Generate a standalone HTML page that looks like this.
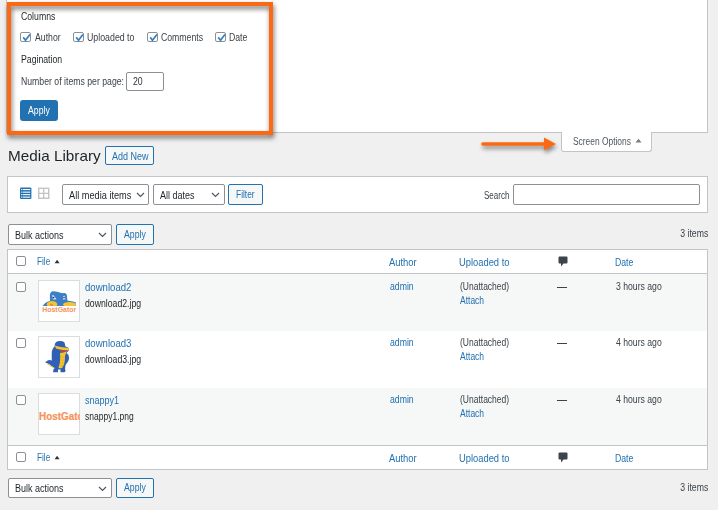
<!DOCTYPE html>
<html><head><meta charset="utf-8">
<style>
html,body{margin:0;padding:0;}
body{width:718px;height:510px;overflow:hidden;background:#f0f0f1;position:relative;font-family:"Liberation Sans",sans-serif;color:#3c434a;}
.a{position:absolute;box-sizing:border-box;}
.t{position:absolute;white-space:nowrap;font-size:10px;line-height:10px;transform:scaleX(.87);transform-origin:0 0;}
.tr{transform-origin:100% 0;}
.lk{color:#2271b1;}
.dk{color:#1d2327;}
.cb{position:absolute;box-sizing:border-box;width:11px;height:11px;border:1px solid #8c8f94;border-radius:2px;background:#fff;}
.cb svg{position:absolute;left:0px;top:0px;}
.sel{position:absolute;box-sizing:border-box;border:1px solid #8c8f94;border-radius:2px;background:#fff;}
.btn2{position:absolute;box-sizing:border-box;border:1px solid #2271b1;border-radius:2px;background:#f6f7f7;}
.chev{position:absolute;}
</style></head><body>

<!-- screen options panel -->
<div class="a" style="left:6px;top:-1px;width:702px;height:134px;background:#fff;border:1px solid #c3c4c7;"></div>
<div class="a" style="left:561px;top:132px;width:91px;height:20px;background:#fff;border:1px solid #c3c4c7;border-top:none;border-radius:0 0 3px 3px;z-index:2;"></div>
<div class="t" style="left:573px;top:137px;transform:scaleX(.84);z-index:3;color:#50575e;">Screen Options</div>
<svg class="a" style="left:635px;top:138px;z-index:3" width="7" height="5"><path d="M0.5 4.5 L3.5 0.8 L6.5 4.5Z" fill="#787c82"/></svg>

<div class="t dk" style="left:21px;top:12px;">Columns</div>

<div class="cb" style="left:20px;top:32px;height:10px;"><svg width="11" height="10"><path d="M2.2 4.2 L4.5 7.3 L8.9 1.5" stroke="#3582c4" stroke-width="1.7" fill="none"/></svg></div>
<div class="t" style="left:35px;top:33px;">Author</div>
<div class="cb" style="left:73px;top:32px;height:10px;"><svg width="11" height="10"><path d="M2.2 4.2 L4.5 7.3 L8.9 1.5" stroke="#3582c4" stroke-width="1.7" fill="none"/></svg></div>
<div class="t" style="left:87px;top:33px;transform:scaleX(.88);">Uploaded to</div>
<div class="cb" style="left:147px;top:32px;height:10px;"><svg width="11" height="10"><path d="M2.2 4.2 L4.5 7.3 L8.9 1.5" stroke="#3582c4" stroke-width="1.7" fill="none"/></svg></div>
<div class="t" style="left:161px;top:33px;">Comments</div>
<div class="cb" style="left:215px;top:32px;height:10px;"><svg width="11" height="10"><path d="M2.2 4.2 L4.5 7.3 L8.9 1.5" stroke="#3582c4" stroke-width="1.7" fill="none"/></svg></div>
<div class="t" style="left:229px;top:33px;">Date</div>

<div class="t dk" style="left:21px;top:55px;">Pagination</div>
<div class="t" style="left:21px;top:77px;">Number of items per page:</div>
<div class="sel" style="left:126px;top:72px;width:38px;height:19px;"></div>
<div class="t" style="left:133px;top:77px;color:#2c3338;">20</div>

<div class="a" style="left:20px;top:100px;width:38px;height:21px;background:#2271b1;border-radius:3px;"></div>
<div class="t" style="left:28px;top:106px;color:#fff;">Apply</div>

<!-- orange annotation box -->
<div class="a" style="left:7px;top:2px;width:266px;height:133px;border:4px solid #fd6912;filter:drop-shadow(1.5px 3.5px 2.5px rgba(0,0,0,.55));z-index:5;"></div>

<!-- arrow -->
<svg class="a" style="left:476px;top:134px;z-index:5;filter:drop-shadow(1px 3px 2px rgba(0,0,0,.45));" width="90" height="22">
<path d="M7 10 L70 10" stroke="#fd6912" stroke-width="3.6" stroke-linecap="round"/>
<path d="M68 3.6 L80 10 L68 16.2 Z" fill="#fd6912"/>
</svg>

<!-- heading -->
<div class="t dk" style="left:8px;top:148px;font-size:15px;line-height:15px;transform:scaleX(1.02);">Media Library</div>
<div class="btn2" style="left:105px;top:146px;width:49px;height:19px;"></div>
<div class="t lk" style="left:112px;top:151.5px;transform:scaleX(.9);">Add New</div>

<!-- filter bar -->
<div class="a" style="left:7px;top:176px;width:701px;height:37px;background:#fff;border:1px solid #c3c4c7;"></div>
<svg class="a" style="left:19px;top:187px;" width="34" height="14">
<rect x="1" y="0.6" width="11.4" height="11.4" rx="1" fill="#2271b1"/>
<rect x="3.6" y="2" width="7.6" height="1.1" fill="#fff"/><rect x="2.1" y="2" width="1" height="1.1" fill="#fff"/>
<rect x="3.6" y="4.6" width="7.6" height="1.1" fill="#fff"/><rect x="2.1" y="4.6" width="1" height="1.1" fill="#fff"/>
<rect x="3.6" y="7.1" width="7.6" height="1.1" fill="#fff"/><rect x="2.1" y="7.1" width="1" height="1.1" fill="#fff"/>
<rect x="3.6" y="9.6" width="7.6" height="1.1" fill="#fff"/><rect x="2.1" y="9.6" width="1" height="1.1" fill="#fff"/>
<rect x="19.7" y="1.3" width="10" height="10" fill="none" stroke="#c3c4c7" stroke-width="1.4"/>
<path d="M24.7 1.3 V11.3 M19.7 6.3 H29.7" stroke="#c3c4c7" stroke-width="1.3"/>
</svg>

<div class="sel" style="left:62px;top:184px;width:87px;height:21px;"></div>
<div class="t dk" style="left:69px;top:190.5px;transform:scaleX(.92);">All media items</div>
<svg class="chev" style="left:136px;top:192px;" width="9" height="6"><path d="M1 1 L4.5 4.5 L8 1" stroke="#50575e" stroke-width="1.2" fill="none"/></svg>
<div class="sel" style="left:153px;top:184px;width:72px;height:21px;"></div>
<div class="t dk" style="left:160px;top:190.5px;transform:scaleX(.9);">All dates</div>
<svg class="chev" style="left:211px;top:192px;" width="9" height="6"><path d="M1 1 L4.5 4.5 L8 1" stroke="#50575e" stroke-width="1.2" fill="none"/></svg>
<div class="btn2" style="left:228px;top:184px;width:35px;height:21px;"></div>
<div class="t lk" style="left:236px;top:190px;transform:scaleX(.84);">Filter</div>

<div class="t" style="left:484px;top:190.5px;transform:scaleX(.8);">Search</div>
<div class="sel" style="left:513px;top:184px;width:187px;height:21px;"></div>

<!-- bulk top -->
<div class="sel" style="left:8px;top:224px;width:104px;height:21px;"></div>
<div class="t dk" style="left:15px;top:230.5px;transform:scaleX(.9);">Bulk actions</div>
<svg class="chev" style="left:98px;top:232px;" width="9" height="6"><path d="M1 1 L4.5 4.5 L8 1" stroke="#50575e" stroke-width="1.2" fill="none"/></svg>
<div class="btn2" style="left:116px;top:224px;width:38px;height:21px;"></div>
<div class="t lk" style="left:124px;top:230px;">Apply</div>
<div class="t tr" style="right:10px;top:229px;">3 items</div>

<!-- table -->
<div class="a" style="left:7px;top:249px;width:701px;height:221px;background:#fff;border:1px solid #c3c4c7;"></div>
<div class="a" style="left:8px;top:273px;width:699px;height:1px;background:#c3c4c7;"></div>
<div class="a" style="left:8px;top:274px;width:699px;height:57px;background:#f6f7f7;"></div>
<div class="a" style="left:8px;top:388px;width:699px;height:57px;background:#f6f7f7;"></div>
<div class="a" style="left:8px;top:445px;width:699px;height:1px;background:#c3c4c7;"></div>

<!-- header -->
<div class="cb" style="left:16px;top:256px;width:10px;height:10px;"></div>
<div class="t lk" style="left:37px;top:257px;transform:scaleX(.82);">File</div>
<svg class="a" style="left:54px;top:259px;" width="6" height="5"><path d="M0.6 4.2 L3.1 0.8 L5.6 4.2Z" fill="#2c3338"/></svg>
<div class="t lk" style="left:389px;top:258px;transform:scaleX(.94);">Author</div>
<div class="t lk" style="left:459px;top:258px;transform:scaleX(.935);">Uploaded to</div>
<svg class="a" style="left:558px;top:256px;" width="10" height="11"><path d="M1.5 0.5 H8.5 Q9.5 0.5 9.5 1.5 V6.5 Q9.5 7.5 8.5 7.5 H5.5 L3 10.5 V7.5 H1.5 Q0.5 7.5 0.5 6.5 V1.5 Q0.5 0.5 1.5 0.5Z" fill="#3c434a"/></svg>
<div class="t lk" style="left:615px;top:258px;">Date</div>

<!-- footer -->
<div class="cb" style="left:16px;top:452px;width:10px;height:10px;"></div>
<div class="t lk" style="left:37px;top:453px;transform:scaleX(.82);">File</div>
<svg class="a" style="left:54px;top:455px;" width="6" height="5"><path d="M0.6 4.2 L3.1 0.8 L5.6 4.2Z" fill="#2c3338"/></svg>
<div class="t lk" style="left:389px;top:454px;transform:scaleX(.94);">Author</div>
<div class="t lk" style="left:459px;top:454px;transform:scaleX(.935);">Uploaded to</div>
<svg class="a" style="left:558px;top:452px;" width="10" height="11"><path d="M1.5 0.5 H8.5 Q9.5 0.5 9.5 1.5 V6.5 Q9.5 7.5 8.5 7.5 H5.5 L3 10.5 V7.5 H1.5 Q0.5 7.5 0.5 6.5 V1.5 Q0.5 0.5 1.5 0.5Z" fill="#3c434a"/></svg>
<div class="t lk" style="left:615px;top:454px;">Date</div>

<!-- row 1 -->
<div class="cb" style="left:16px;top:282px;width:10px;height:10px;"></div>
<div class="a" style="left:38px;top:280px;width:42px;height:42px;background:#fff;border:1px solid #dcdcde;"></div>
<svg class="a" style="left:38px;top:280px;" width="42" height="42">
<path d="M4.7 26 C6.5 23, 9.5 21.5, 12 20.8 L11.9 17 C11.8 12.8, 13.2 11.2, 15.3 11.2 C18.5 11.2, 21.5 12.8, 25 13.3 C26.5 12.9, 28 13.1, 28.8 14.8 L29.4 20.6 C32 21.2, 35.5 21.6, 37.7 22.3 L37.7 26 Z" fill="#3b7fc8"/>
<ellipse cx="14" cy="24.2" rx="5.2" ry="3.2" fill="#f3c532"/>
<ellipse cx="13.5" cy="25" rx="1.6" ry="1.2" fill="#ef8b3a"/>
<ellipse cx="31.5" cy="24.6" rx="6.5" ry="2.6" fill="#f3c532"/>
<rect x="4" y="26" width="35" height="2" fill="#fff"/>
<path d="M14.3 15 L15.5 15.3 L18.5 19.2 L15 19.6 Z" fill="#e9eef6"/>
<path d="M25.2 16 L26.6 15.8 L27.5 19.3 L25 19.5 Z" fill="#e9eef6"/>
<circle cx="15.6" cy="17.6" r="0.9" fill="#1d3f6a"/><circle cx="26" cy="17.6" r="0.8" fill="#1d3f6a"/>
<text x="4.2" y="32.2" font-family="Liberation Sans" font-weight="bold" font-size="6.8" fill="#f5955e" textLength="34" lengthAdjust="spacingAndGlyphs">HostGator</text>
</svg>
<div class="t lk" style="left:85px;top:282.5px;transform:scaleX(.96);">download2</div>
<div class="t dk" style="left:85px;top:299px;">download2.jpg</div>
<div class="t lk" style="left:390px;top:282px;">admin</div>
<div class="t" style="left:460px;top:282px;transform:scaleX(.85);">(Unattached)</div>
<div class="t lk" style="left:460px;top:296px;transform:scaleX(.85);">Attach</div>
<div class="a" style="left:557px;top:287px;width:10px;height:1px;background:#3c434a;"></div>
<div class="t" style="left:616px;top:282px;transform:scaleX(.865);">3 hours ago</div>

<!-- row 2 -->
<div class="cb" style="left:16px;top:338px;width:10px;height:10px;"></div>
<div class="a" style="left:38px;top:336px;width:42px;height:42px;background:#fff;border:1px solid #dcdcde;"></div>
<svg class="a" style="left:38px;top:336px;" width="42" height="42">
<path d="M18.5 5.8 C20.5 4.6, 24.5 4.8, 26.5 6.5 L27.5 10.5 L30.5 11.8 L30.8 14.5 L28.5 17 L30.5 19 C31.5 22, 31 25, 29 27 L27.5 29 L27 33 C28 34.5, 27.5 36.3, 26 36.3 L22.5 36.3 L22.5 33.5 L20 33.5 L20 36.3 L15.2 36.3 C15 34.5, 15.5 33, 16.5 32 C14.5 31, 12.5 29, 10.5 27.8 L7.2 26.6 C8.5 25, 10 24, 11.5 24 L13.8 24.5 L13.7 18 C13.7 14, 15 12, 16.5 10.5 L17 7.5 Z" fill="#3060b6"/>
<path d="M16.8 9.6 C20 10.6, 25 11.5, 30.6 11.9 L31 13.2 L30 14.4 C26 14.3, 21 13.8, 18 12.6 Z" fill="#f2c52c"/>
<path d="M20.5 13.8 C22.5 15.5, 25 16.6, 28.5 15.2 L29.2 14.3 C26 14.3, 23 14.2, 20.5 13.8 Z" fill="#d9472a"/>
<path d="M22 17 C24 17, 26.5 16.5, 28.8 15.3 C28 17.5, 27.3 19, 27 20 C27 24, 26.8 28, 24.5 31.5 C23 32.8, 21 32.5, 20.5 31.5 C22 28, 22.5 23, 22 17 Z" fill="#f2c52c"/>
<path d="M22.3 21 H26.9 M22.5 24 H26.7 M22.3 27 H26.2 M21.6 29.8 H25.2" stroke="#d8a21e" stroke-width="0.5"/>
<path d="M9 27.5 C11.5 29.2, 14 31.2, 16.5 32.3" stroke="#f2c52c" stroke-width="0.9" fill="none"/>
</svg>
<div class="t lk" style="left:85px;top:338.5px;transform:scaleX(.96);">download3</div>
<div class="t dk" style="left:85px;top:355px;">download3.jpg</div>
<div class="t lk" style="left:390px;top:338px;">admin</div>
<div class="t" style="left:460px;top:338px;transform:scaleX(.85);">(Unattached)</div>
<div class="t lk" style="left:460px;top:352px;transform:scaleX(.85);">Attach</div>
<div class="a" style="left:557px;top:343px;width:10px;height:1px;background:#3c434a;"></div>
<div class="t" style="left:616px;top:338px;transform:scaleX(.865);">4 hours ago</div>

<!-- row 3 -->
<div class="cb" style="left:16px;top:395px;width:10px;height:10px;"></div>
<div class="a" style="left:38px;top:393px;width:42px;height:42px;background:#fff;border:1px solid #dcdcde;"></div>
<div class="a" style="left:38px;top:393px;width:42px;height:42px;overflow:hidden;">
<svg width="42" height="42" style="position:absolute;left:0;top:0"><text x="1" y="26.7" font-family="Liberation Sans" font-weight="bold" font-size="10" fill="#f6925a" stroke="#f6925a" stroke-width="0.2" textLength="48.5" lengthAdjust="spacingAndGlyphs">HostGator</text></svg></div>
<div class="t lk" style="left:85px;top:395.5px;transform:scaleX(.9);">snappy1</div>
<div class="t dk" style="left:85px;top:412px;transform:scaleX(.85);">snappy1.png</div>
<div class="t lk" style="left:390px;top:395px;">admin</div>
<div class="t" style="left:460px;top:395px;transform:scaleX(.85);">(Unattached)</div>
<div class="t lk" style="left:460px;top:409px;transform:scaleX(.85);">Attach</div>
<div class="a" style="left:557px;top:400px;width:10px;height:1px;background:#3c434a;"></div>
<div class="t" style="left:616px;top:395px;transform:scaleX(.865);">4 hours ago</div>

<!-- bulk bottom -->
<div class="sel" style="left:8px;top:478px;width:104px;height:20px;"></div>
<div class="t dk" style="left:15px;top:484px;transform:scaleX(.9);">Bulk actions</div>
<svg class="chev" style="left:98px;top:486px;" width="9" height="6"><path d="M1 1 L4.5 4.5 L8 1" stroke="#50575e" stroke-width="1.2" fill="none"/></svg>
<div class="btn2" style="left:116px;top:478px;width:38px;height:20px;"></div>
<div class="t lk" style="left:124px;top:483px;">Apply</div>
<div class="t tr" style="right:10px;top:483px;">3 items</div>

</body></html>
